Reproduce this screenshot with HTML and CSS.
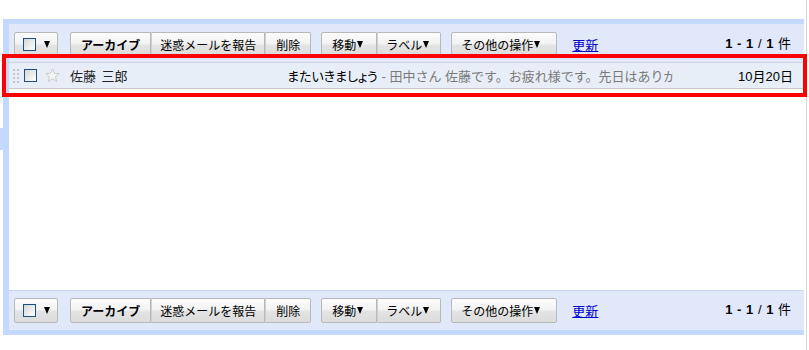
FILE: index.html
```html
<!DOCTYPE html>
<html lang="ja">
<head>
<meta charset="UTF-8">
<link rel="stylesheet" href="styles.css">
<title>受信トレイ</title>
</head>
<body>
<div id="screen">
	<div id="mail">
		<div class="toolbar">
			<div class="btn select"><span class="box"></span><span class="arrow"></span></div>
			<div class="group">
				<div class="btn bold">アーカイブ</div>
				<div class="btn spam">迷惑メールを報告</div>
				<div class="btn">削除</div>
			</div>
			<div class="group">
				<div class="btn">移動<span class="arrow"></span></div>
				<div class="btn label">ラベル<span class="arrow"></span></div>
			</div>
			<div class="btn more">その他の操作<span class="arrow"></span></div>
			<a class="refresh" href="#">更新</a>
			<div class="count"><b>1 - 1</b> / <b>1</b> 件</div>
		</div>

		<div class="row">
			<svg class="handle" width="6" height="14" viewBox="0 0 6 14">
				<rect x="0" y="0" width="2" height="2"/><rect x="4" y="0" width="2" height="2"/>
				<rect x="0" y="4" width="2" height="2"/><rect x="4" y="4" width="2" height="2"/>
				<rect x="0" y="8" width="2" height="2"/><rect x="4" y="8" width="2" height="2"/>
				<rect x="0" y="12" width="2" height="2"/><rect x="4" y="12" width="2" height="2"/>
			</svg>
			<span class="box"></span>
			<svg class="star" width="15" height="15" viewBox="0 0 15 15">
				<path d="M7.5 0.8 L9.4 5.2 L14.2 5.6 L10.5 8.7 L11.7 13.5 L7.5 10.9 L3.3 13.5 L4.5 8.7 L0.8 5.6 L5.6 5.2 Z"/>
			</svg>
			<div class="from">佐藤 三郎</div>
			<div class="subject">またいきましょう<span class="snippet"> - 田中さん 佐藤です。お疲れ様です。先日はありがとうございました。</span></div>
			<div class="date">10月20日</div>
		</div>

		<div class="empty"></div>

		<div class="toolbar bottom">
			<div class="btn select"><span class="box"></span><span class="arrow"></span></div>
			<div class="group">
				<div class="btn bold">アーカイブ</div>
				<div class="btn spam">迷惑メールを報告</div>
				<div class="btn">削除</div>
			</div>
			<div class="group">
				<div class="btn">移動<span class="arrow"></span></div>
				<div class="btn label">ラベル<span class="arrow"></span></div>
			</div>
			<div class="btn more">その他の操作<span class="arrow"></span></div>
			<a class="refresh" href="#">更新</a>
			<div class="count"><b>1 - 1</b> / <b>1</b> 件</div>
		</div>
	</div>
	<div class="rule"></div>
</div>
<div class="highlight"></div>
</body>
</html>
```

FILE: styles.css
```css
body{
	margin: 0;
	background: #ffffff;
	font-family: "Liberation Sans", "Noto Sans CJK JP", sans-serif;
	font-size: 13px;
	color: #000000;
}

#screen{
	display: flex;
	height: 350px;
}

#mail{
	position: relative;
	align-self: flex-start;
	width: 795px;
	margin: 19px 0 0 3px;
	border-left: 6px solid #c3d9ff;
	border-top: 5px solid #c3d9ff;
	border-bottom: 5px solid #c3d9ff;
}

/* selected tab of the left nav touching the box */
#mail::before{
	content: "";
	position: absolute;
	left: -9px;
	top: 104px;
	width: 3px;
	height: 22px;
	background: #c3d9ff;
}

.rule{
	width: 1px;
	margin-left: 2px;
	background: #d6d6d6;
}

.toolbar{
	display: flex;
	align-items: center;
	background: #e0e8fa;
	padding: 8px 13px 5px 5px;
}

.toolbar.bottom{
	border-top: 1px solid #c9d5ef;
	padding: 7px 13px 7px 5px;
}

.group{
	display: flex;
	margin-left: 10px;
}

.select + .group{
	margin-left: 12px;
}

.btn{
	display: flex;
	align-items: center;
	box-sizing: border-box;
	height: 25px;
	padding: 0 10px;
	border: 1px solid #b9b9b9;
	border-radius: 2px;
	background: linear-gradient(#fcfcfc 0%, #f3f3f3 45%, #e3e3e3 55%, #dcdcdc 100%);
	font-size: 12px;
	white-space: nowrap;
	cursor: default;
}

.group .btn{
	border-radius: 0;
}

.group .btn + .btn{
	border-left-color: #cfcfcf;
}

.group .btn:first-child{
	border-radius: 2px 0 0 2px;
}

.group .btn:last-child{
	border-radius: 0 2px 2px 0;
}

.bold{
	font-weight: bold;
}

.spam{
	padding: 0 8px;
}

.label{
	padding: 0 8px;
}

.more{
	padding: 0 13px 0 9px;
}

.group + .btn{
	margin-left: 10px;
}

.select{
	padding: 0 7px 0 8px;
}

.arrow{
	display: inline-block;
	width: 0;
	height: 0;
	margin: 0 3px 0 1px;
	border-left: 3.5px solid transparent;
	border-right: 3.5px solid transparent;
	border-top: 7px solid #000000;
}

.select .arrow{
	margin: 0 0 0 8px;
}

.box{
	display: inline-block;
	box-sizing: border-box;
	width: 13px;
	height: 13px;
	border: 1px solid #1f4f7f;
	background: linear-gradient(135deg, #d6d6d6, #ffffff);
}

.refresh{
	margin-left: 15px;
	color: #0000cc;
	text-decoration: underline;
	font-size: 13px;
}

.count{
	margin-left: auto;
	margin-top: -5px;
	font-size: 13px;
	word-spacing: 1px;
}

.row{
	display: flex;
	align-items: center;
	height: 25px;
	padding-left: 4px;
	background: #e8eef7;
	border-top: 1px solid #cdd4e4;
	border-bottom: 1px solid #c8c8c8;
}

.handle{
	fill: #c6c9cf;
}

.row .box{
	margin-left: 5px;
}

.star{
	margin-left: 8px;
	fill: #f4f4f4;
	stroke: #cccccc;
	stroke-width: 1;
}

.from{
	width: 217px;
	margin-left: 10px;
	color: #222222;
	word-spacing: 2px;
}

.subject{
	width: 386px;
	overflow: hidden;
	white-space: nowrap;
	color: #000000;
	font-feature-settings: "palt";
}

.snippet{
	color: #7a7a7a;
	font-feature-settings: normal;
}

.date{
	flex: 1;
	text-align: right;
	padding-right: 11px;
}

.empty{
	height: 201px;
	background: #ffffff;
}

.highlight{
	position: absolute;
	left: 2px;
	top: 54px;
	width: 805px;
	height: 43px;
	box-sizing: border-box;
	border: 4px solid #ff0000;
}
```
